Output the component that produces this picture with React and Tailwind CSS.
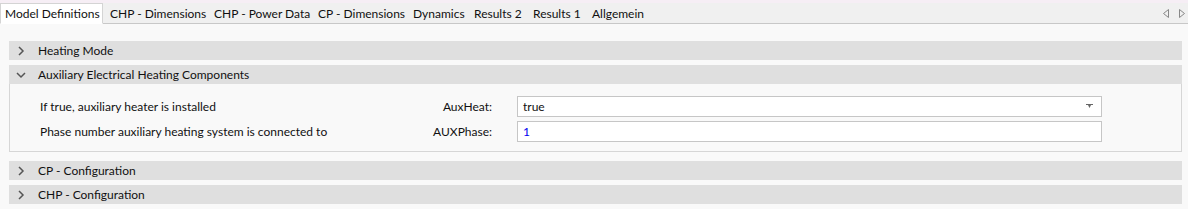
import React from "react";

const tabs = [
  { label: "Model Definitions", w: "w-[103px]", active: true },
  { label: "CHP - Dimensions", w: "w-[104px]" },
  { label: "CHP - Power Data", w: "w-[104px]" },
  { label: "CP - Dimensions", w: "w-[95px]" },
  { label: "Dynamics", w: "w-[61px]" },
  { label: "Results 2", w: "w-[59px]" },
  { label: "Results 1", w: "w-[59px]" },
  { label: "Allgemein", w: "w-[62px]" },
];

function Chevron({ open }) {
  return (
    <svg width="10" height="10" viewBox="0 0 10 10" className="shrink-0">
      {open ? (
        <path d="M1 3 L5 7 L9 3" fill="none" stroke="#555" strokeWidth="1.5" />
      ) : (
        <path d="M3 1 L7 5 L3 9" fill="none" stroke="#555" strokeWidth="1.5" />
      )}
    </svg>
  );
}

function Header({ title, open }) {
  return (
    <div className="h-[19px] bg-[#dfdfdf] flex items-center pl-[7px] gap-[12px] whitespace-nowrap">
      <Chevron open={open} />
      <span>{title}</span>
    </div>
  );
}

export default function App() {
  return (
    <div
      className="w-[1188px] h-[209px] bg-[#f9f9f9] text-[12px] text-[#111] overflow-hidden whitespace-nowrap"
      style={{ fontFamily: 'Lato, "Noto Sans", sans-serif' }}
    >
      {/* tab strip */}
      <div className="h-[24px] bg-[#f0f0f0] border-t-[3px] border-[#f6eef5] border-b border-b-[#c8c8c8] flex items-end relative">
        {tabs.map((t) =>
          t.active ? (
            <div
              key={t.label}
              className={`${t.w} shrink-0 h-[21px] -mb-px bg-white border border-[#d4d4d4] border-b-white flex items-center pl-[4px] pt-px leading-none`}
            >
              {t.label}
            </div>
          ) : (
            <div key={t.label} className={`${t.w} shrink-0 h-[20px] flex items-center pl-[7px] pt-px leading-none`}>
              {t.label}
            </div>
          )
        )}
        <div className="ml-auto flex items-center gap-[10px] pr-[3px] h-[20px]">
          <svg width="6" height="9" viewBox="0 0 6 9">
            <path d="M5.5 0.5 L0.5 4.5 L5.5 8.5 Z" fill="none" stroke="#888" strokeWidth="1" />
          </svg>
          <svg width="6" height="9" viewBox="0 0 6 9">
            <path d="M0.5 0.5 L5.5 4.5 L0.5 8.5 Z" fill="none" stroke="#888" strokeWidth="1" />
          </svg>
        </div>
      </div>

      {/* groups */}
      <div className="pt-[17px] pl-[9px] pr-[6px] flex flex-col">
        <Header title="Heating Mode" />
        <div className="mt-[5px]">
          <Header title="Auxiliary Electrical Heating Components" open />
          <div className="border border-t-0 border-[#d6d6d6] pt-[12px] pb-[9px] pl-[30px]">
            <div className="grid grid-cols-[347px_80px_585px] gap-x-[25px] gap-y-[4px] items-center">
              <span>If true, auxiliary heater is installed</span>
              <span className="text-right">AuxHeat:</span>
              <div className="h-[21px] bg-white border border-[#c6c6c6] flex items-center pl-[5px] pr-[8px]">
                <span className="flex-1">true</span>
                <svg width="7" height="5" viewBox="0 0 7 5">
                  <path d="M0 0 H7 V1 H5 L3.5 4 L2 1 H0 Z" fill="#666" />
                </svg>
              </div>
              <span>Phase number auxiliary heating system is connected to</span>
              <span className="text-right">AUXPhase:</span>
              <div className="h-[21px] bg-white border border-[#c6c6c6] flex items-center pl-[5px] text-[#0000f0]">
                1
              </div>
            </div>
          </div>
        </div>
        <div className="mt-[9px] flex flex-col gap-[5px]">
          <Header title="CP - Configuration" />
          <Header title="CHP - Configuration" />
        </div>
      </div>
    </div>
  );
}
